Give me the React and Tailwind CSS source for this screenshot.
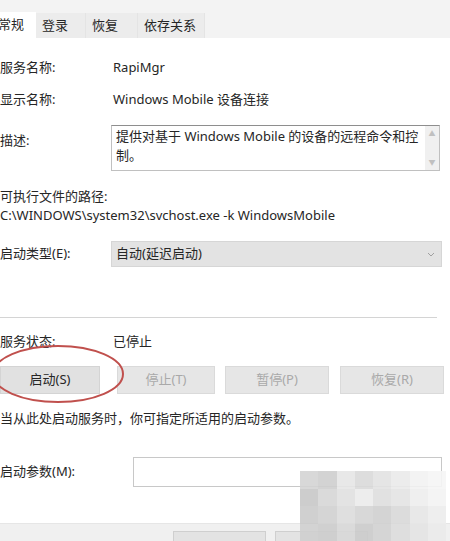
import React from 'react';

const FONT = { fontFamily: '"Noto Sans", "Noto Sans CJK SC", sans-serif' };

function Row({ label, children, className = '' }) {
  return (
    <div className={`flex items-center ${className}`}>
      <div className="w-[113px] shrink-0">{label}</div>
      <div className="flex-1">{children}</div>
    </div>
  );
}

export default function App() {
  return (
    <div className="relative w-[450px] h-[541px] overflow-hidden bg-white text-[13px] text-[#262626]" style={FONT}>
      {/* Tabs */}
      <div className="h-[38px] bg-[#f3f3f3] flex items-end">
        <div className="w-[36px] h-[26px] bg-white flex items-center overflow-hidden">
          <span className="-ml-[2px]">常规</span>
        </div>
        <div className="flex h-[25px] bg-[#ececec]">
          <div className="w-[50px] pl-[6px] flex items-center border-r border-[#e4e4e4]">登录</div>
          <div className="w-[52px] pl-[6px] flex items-center border-r border-[#e4e4e4]">恢复</div>
          <div className="w-[67px] pl-[6px] flex items-center border-r border-[#e4e4e4]">依存关系</div>
        </div>
      </div>

      <div className="flex flex-col">
        <Row label="服务名称:" className="mt-[14px] h-[32px]">RapiMgr</Row>
        <Row label="显示名称:" className="h-[32px]">Windows Mobile 设备连接</Row>

        {/* Description */}
        <div className="flex mt-[9px] h-[46px]">
          <div className="w-[111px] shrink-0 pt-[6px]">描述:</div>
          <div className="w-[329px] h-[46px] border border-[#c0c0c0] border-t-[#8e8e8e] flex">
            <div className="flex-1 px-[4px] py-[1px] leading-[19px]">
              提供对基于 Windows Mobile 的设备的远程命令和控制。
            </div>
            <div className="w-[14px] bg-[#f0f0f0] flex flex-col justify-between items-center py-[4px] text-[#c0c0c0] text-[7px] leading-none">
              <span>▲</span>
              <span>▼</span>
            </div>
          </div>
        </div>

        <div className="mt-[16px] h-[20px] flex items-center">可执行文件的路径:</div>
        <div className="h-[18px] flex items-center">C:\WINDOWS\system32\svchost.exe -k WindowsMobile</div>

        {/* Startup type */}
        <div className="flex items-center mt-[16px]">
          <div className="w-[111px] shrink-0">启动类型(E):</div>
          <div className="w-[331px] h-[26px] bg-[#e3e3e3] border border-[#d6d6d6] flex items-center justify-between px-[4px]">
            <span>自动(延迟启动)</span>
            <svg width="8" height="5" viewBox="0 0 8 5" className="mr-[2px]">
              <path d="M1 1l3 3 3-3" fill="none" stroke="#a0a0a0" strokeWidth="1" />
            </svg>
          </div>
        </div>

        <div className="mt-[50px] h-px w-[437px] bg-[#d4d4d4]" />

        <Row label="服务状态:" className="mt-[14px] h-[20px]">已停止</Row>

        {/* Buttons */}
        <div className="flex mt-[14px] h-[28px] gap-[10px]">
          <button className="w-[100px] bg-[#e1e1e1] border border-[#d4d4d4] text-[#262626]">启动(S)</button>
          <button className="w-[98px] ml-[7px] bg-[#e6e6e6] border border-[#dadada] text-[#a9a9a9]">停止(T)</button>
          <button className="w-[104px] bg-[#e6e6e6] border border-[#dadada] text-[#a9a9a9]">暂停(P)</button>
          <button className="w-[104px] ml-[1px] bg-[#e6e6e6] border border-[#dadada] text-[#a9a9a9]">恢复(R)</button>
        </div>

        <div className="mt-[16px] h-[18px] flex items-center">当从此处启动服务时，你可指定所适用的启动参数。</div>

        <div className="flex items-center mt-[29px]">
          <div className="w-[133px] shrink-0">启动参数(M):</div>
          <div className="w-[309px] h-[30px] border border-[#c8c8c8] bg-white" />
        </div>

        {/* Bottom strip */}
        <div className="mt-[36px] h-[20px] bg-[#f0f0f0] flex items-end border-t border-[#e6e6e6]">
          <div className="ml-[173px] w-[93px] h-[12px] bg-[#e3e3e3] border border-[#cfcfcf] border-b-0" />
          <div className="ml-[9px] w-[93px] h-[12px] bg-[#e3e3e3] border border-[#cfcfcf] border-b-0" />
        </div>
      </div>

      {/* Red circle annotation */}
      <svg className="absolute left-0 top-0 pointer-events-none" width="450" height="541">
        <ellipse cx="58" cy="374" rx="65" ry="28" fill="none" stroke="#c0504d" strokeWidth="2" />
      </svg>

      {/* Watermark mosaic */}
      <div className="absolute left-[300px] top-[471px] w-[146px] h-[70px] grid grid-cols-8 grid-rows-4 opacity-90">
        <div className="bg-[#d4d4d4]" /><div className="bg-[#cfcfcf]" /><div className="bg-[#e6e6e6]" /><div className="bg-[#dadada]" /><div className="bg-[#e3e3e3]" /><div className="bg-[#ebebeb]" /><div className="bg-[#f2f2f2]" /><div className="bg-[#f6f6f6]" />
        <div className="bg-[#c8c8c8]" /><div className="bg-[#d6d6d6]" /><div className="bg-[#e1e1e1]" /><div className="bg-[#ececec]" /><div className="bg-[#dedede]" /><div className="bg-[#e4e4e4]" /><div className="bg-[#eeeeee]" /><div className="bg-[#f3f3f3]" />
        <div className="bg-[#cbcbcb]" /><div className="bg-[#d1d1d1]" /><div className="bg-[#dcdcdc]" /><div className="bg-[#d4d4d4]" /><div className="bg-[#d0d0d0]" /><div className="bg-[#d9d9d9]" /><div className="bg-[#e6e6e6]" /><div className="bg-[#ededed]" />
        <div className="bg-[#d0d0d0]" /><div className="bg-[#cdcdcd]" /><div className="bg-[#d8d8d8]" /><div className="bg-[#cccccc]" /><div className="bg-[#d3d3d3]" /><div className="bg-[#dddddd]" /><div className="bg-[#e4e4e4]" /><div className="bg-[#ebebeb]" />
      </div>
    </div>
  );
}
